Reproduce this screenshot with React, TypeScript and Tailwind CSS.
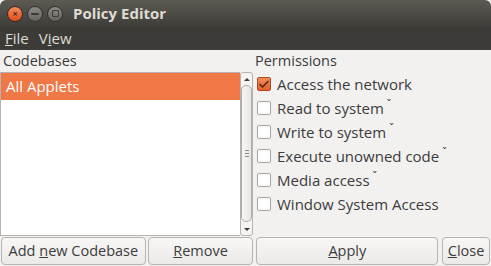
import { Check } from "lucide-react";

const perms = [
  { label: "Access the network", checked: true, more: false },
  { label: "Read to system", checked: false, more: true },
  { label: "Write to system", checked: false, more: true },
  { label: "Execute unowned code", checked: false, more: true },
  { label: "Media access", checked: false, more: true },
  { label: "Window System Access", checked: false, more: false },
];

const btn =
  "h-[28px] rounded-[4px] border border-[#b8b5ae] bg-gradient-to-b from-[#f8f7f6] to-[#ebeae8] text-[#3c3c3c] text-[14.5px] flex items-center justify-center";

export default function App() {
  return (
    <div
      className="w-[491px] h-[266px] flex flex-col bg-[#f2f1f0] overflow-hidden"
      style={{ fontFamily: "'Open Sans', 'DejaVu Sans', sans-serif" }}
    >
      {/* title bar */}
      <div className="h-[27px] flex items-center bg-gradient-to-b from-[#5c5a53] to-[#3e3d39] rounded-t-[6px] px-[7px]">
        <div className="flex items-center gap-[4px]">
          <div className="w-[16px] h-[16px] rounded-full bg-gradient-to-b from-[#f58a5c] to-[#df4a16] border border-[#3a2a20] flex items-center justify-center text-[#4a2a1a] text-[9px] font-bold leading-none">
            ×
          </div>
          <div className="w-[16px] h-[16px] rounded-full bg-gradient-to-b from-[#8d8b85] to-[#65635d] border border-[#33322e] flex items-center justify-center">
            <div className="w-[8px] h-[2px] bg-[#3c3b37] rounded" />
          </div>
          <div className="w-[16px] h-[16px] rounded-full bg-gradient-to-b from-[#8d8b85] to-[#65635d] border border-[#33322e] flex items-center justify-center">
            <div className="w-[7px] h-[7px] border-[1.5px] border-[#3c3b37] rounded-[1px]" />
          </div>
        </div>
        <div className="ml-[10px] text-[15px] font-bold text-[#dfdbd2]">Policy Editor</div>
      </div>
      {/* menu bar */}
      <div className="h-[23px] bg-[#3c3b37] flex items-center gap-[10px] px-[5px] text-[15px] text-[#dfdbd2]">
        <span>
          <span className="underline">F</span>ile
        </span>
        <span>
          V<span className="underline">i</span>ew
        </span>
      </div>
      {/* body */}
      <div className="flex-1 flex flex-col">
        <div className="flex h-[22px] items-center text-[14.5px] text-[#3c3c3c]">
          <div className="w-[255px] pl-[3px]">Codebases</div>
          <div>Permissions</div>
        </div>
        <div className="flex h-[164px]">
          <div className="w-[240px] bg-white border border-[#b6b3ae] border-r-0">
            <div className="h-[27px] bg-[#f07746] text-white text-[15px] flex items-center pl-[5px]">
              All Applets
            </div>
          </div>
          {/* scrollbar */}
          <div className="w-[13px] border border-[#b6b3ae] rounded-[3px] bg-[#f5f4f3] flex flex-col items-center">
            <div className="h-[12px] flex items-center justify-center">
              <div className="w-0 h-0 border-l-[3px] border-r-[3px] border-b-[3px] border-l-transparent border-r-transparent border-b-[#3c3c3c]" />
            </div>
            <div className="flex-1 w-[11px] rounded-[5px] border border-[#b0ada6] bg-gradient-to-r from-[#f7f6f5] to-[#e8e6e3] flex items-center justify-center mb-[1px]">
              <div className="flex flex-col gap-[2px]">
                <div className="w-[4px] h-[1px] bg-[#8d8a84]" />
                <div className="w-[4px] h-[1px] bg-[#8d8a84]" />
                <div className="w-[4px] h-[1px] bg-[#8d8a84]" />
              </div>
            </div>
            <div className="h-[12px] flex items-center justify-center">
              <div className="w-0 h-0 border-l-[3px] border-r-[3px] border-t-[3px] border-l-transparent border-r-transparent border-t-[#3c3c3c]" />
            </div>
          </div>
          {/* permissions */}
          <div className="flex-1 flex flex-col pl-[4px]">
            {perms.map((p) => (
              <div key={p.label} className="h-[24px] flex items-center">
                {p.checked ? (
                  <div className="w-[14px] h-[14px] rounded-[2px] border border-[#b04a1c] bg-gradient-to-b from-[#f58a5c] to-[#e0602c] flex items-center justify-center">
                    <Check size={13} strokeWidth={3.5} color="#5a2a14" />
                  </div>
                ) : (
                  <div className="w-[14px] h-[14px] rounded-[2px] border border-[#a8a59f] bg-white" />
                )}
                <span className="ml-[6px] text-[15px] text-[#3c3c3c]">{p.label}</span>
                {p.more && <span className="ml-[3px] text-[11px] text-[#3c3c3c] -mt-[8px]">ˇ</span>}
              </div>
            ))}
          </div>
        </div>
        {/* buttons */}
        <div className="flex gap-[2px] px-[1px] pt-[1px]">
          <div className={`${btn} w-[145px]`}>
            Add&nbsp;<span className="underline">n</span>ew Codebase
          </div>
          <div className={`${btn} w-[106px]`}>
            <span className="underline">R</span>emove
          </div>
          <div className={`${btn} w-[182px] ml-[1px]`}>
            <span className="underline">A</span>pply
          </div>
          <div className={`${btn} w-[48px] ml-[2px]`}>
            <span className="underline">C</span>lose
          </div>
        </div>
      </div>
    </div>
  );
}
